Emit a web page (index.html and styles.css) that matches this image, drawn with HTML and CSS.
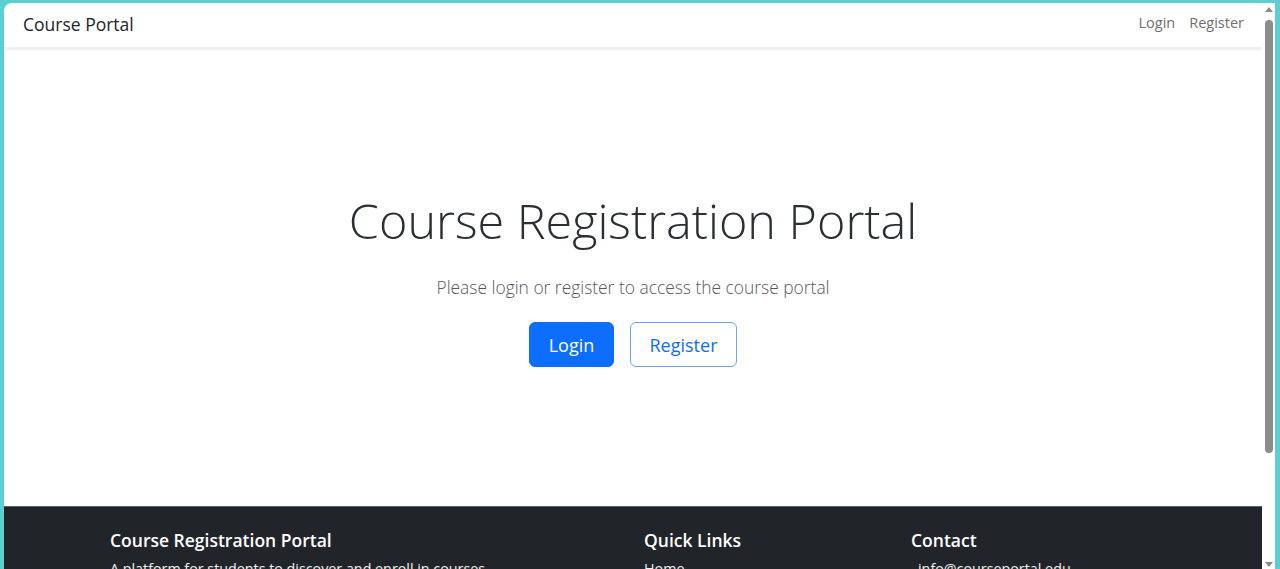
FILE: index.html
```html
<!DOCTYPE html>
<html lang="en">
<head>
<meta charset="utf-8">
<title>Course Portal</title>
<link rel="stylesheet" href="styles.css">
</head>
<body>
<div class="window">
  <div class="page">
    <nav class="navbar">
      <a class="brand" href="#">Course Portal</a>
      <div class="nav-links">
        <a class="nav-link" href="#">Login</a>
        <a class="nav-link" href="#">Register</a>
      </div>
    </nav>
    <main class="hero">
      <h1 class="hero-title">Course Registration Portal</h1>
      <p class="hero-lead">Please login or register to access the course portal</p>
      <div class="hero-actions">
        <a class="btn btn-primary" href="#">Login</a>
        <a class="btn btn-outline" href="#">Register</a>
      </div>
    </main>
    <footer class="footer">
      <div class="footer-inner">
        <div class="footer-col">
          <h5 class="footer-heading">Course Registration Portal</h5>
          <p class="footer-text">A platform for students to discover and enroll in courses.</p>
        </div>
        <div class="footer-col">
          <h5 class="footer-heading">Quick Links</h5>
          <ul class="footer-list"><li><a href="#">Home</a></li><li><a href="#">Login</a></li></ul>
        </div>
        <div class="footer-col">
          <h5 class="footer-heading">Contact</h5>
          <p class="footer-text footer-contact">info@courseportal.edu</p>
        </div>
      </div>
    </footer>
  </div>
  <div class="scrollbar">
    <span class="arrow arrow-up"></span>
    <span class="thumb"></span>
    <span class="arrow arrow-down"></span>
  </div>
</div>
</body>
</html>
```

FILE: styles.css
```css
* { box-sizing: border-box; }
html, body { margin: 0; height: 100%; overflow: hidden; }
body {
  background: #5ccfd0;
  font-family: "Open Sans", "Noto Sans", sans-serif;
  color: #212529;
}
a { text-decoration: none; }

.window {
  display: flex;
  height: 569px;
  padding: 3px 5px 0 4px;
}
.page {
  flex: 1;
  background: #fff;
  border-top-left-radius: 8px;
  overflow: hidden;
  display: flex;
  flex-direction: column;
}

.navbar {
  height: 45px;
  flex: none;
  display: flex;
  align-items: center;
  justify-content: space-between;
  padding: 0 18px 0 19px;
  box-shadow: 0 2px 3px rgba(0,0,0,0.07);
  border-bottom: 1px solid #f0f0f0;
  position: relative;
  z-index: 1;
}
.brand {
  color: #212529;
  font-size: 17.5px;
  margin-top: -3px;
}
.nav-links { display: flex; gap: 14px; margin-top: -5px; }
.nav-link { color: #6f6f6f; font-size: 14.5px; }

.hero {
  height: 458px;
  flex: none;
  display: flex;
  flex-direction: column;
  align-items: center;
  justify-content: center;
  text-align: center;
}
.hero-title {
  margin: 0 0 18px;
  font-size: 48.5px;
  font-weight: 300;
  line-height: 67px;
  color: #2b2f33;
}
.hero-lead {
  margin: 0 0 20px;
  font-size: 17.4px;
  font-weight: 300;
  line-height: 30px;
  color: #555a5f;
}
.hero-actions { display: flex; gap: 16px; }
.btn {
  height: 45px;
  display: inline-flex;
  align-items: center;
  justify-content: center;
  font-size: 18px;
  border-radius: 6px;
  border: 1px solid #0d6efd;
}
.btn-primary { width: 85px; background: #0d6efd; color: #fff; }
.btn-outline { width: 107px; background: #fff; color: #0d6efd; border-color: #6ea3f7; }

.footer {
  flex: 1;
  background: #212529;
  border-top: 1px solid #5b5e62;
  padding-top: 21px;
  color: #fff;
}
.footer-inner {
  width: 1046px;
  margin: 0 auto;
  display: grid;
  grid-template-columns: 534px 267px 1fr;
}
.footer-heading {
  margin: 0 0 6px;
  font-size: 17.5px;
  font-weight: 600;
  line-height: 24px;
}
.footer-text { margin: 0; font-size: 14.3px; line-height: 22px; color: #f0f0f0; }
.footer-contact { padding-left: 7px; }
.footer-list { list-style: none; margin: 0; padding: 0; font-size: 14.3px; line-height: 22px; }
.footer-list a { color: #f0f0f0; }

.scrollbar {
  width: 13px;
  flex: none;
  background: #fff;
  position: relative;
}
.thumb {
  position: absolute;
  left: 3px;
  top: 17px;
  width: 8px;
  height: 433px;
  background: #8c8c8c;
  border-radius: 4px;
}
.arrow {
  position: absolute;
  left: 3px;
  width: 0; height: 0;
  border-left: 4px solid transparent;
  border-right: 4px solid transparent;
}
.arrow-up { top: 4px; border-bottom: 5px solid #8c8c8c; }
.arrow-down { bottom: 2px; border-top: 5px solid #8c8c8c; }
```
